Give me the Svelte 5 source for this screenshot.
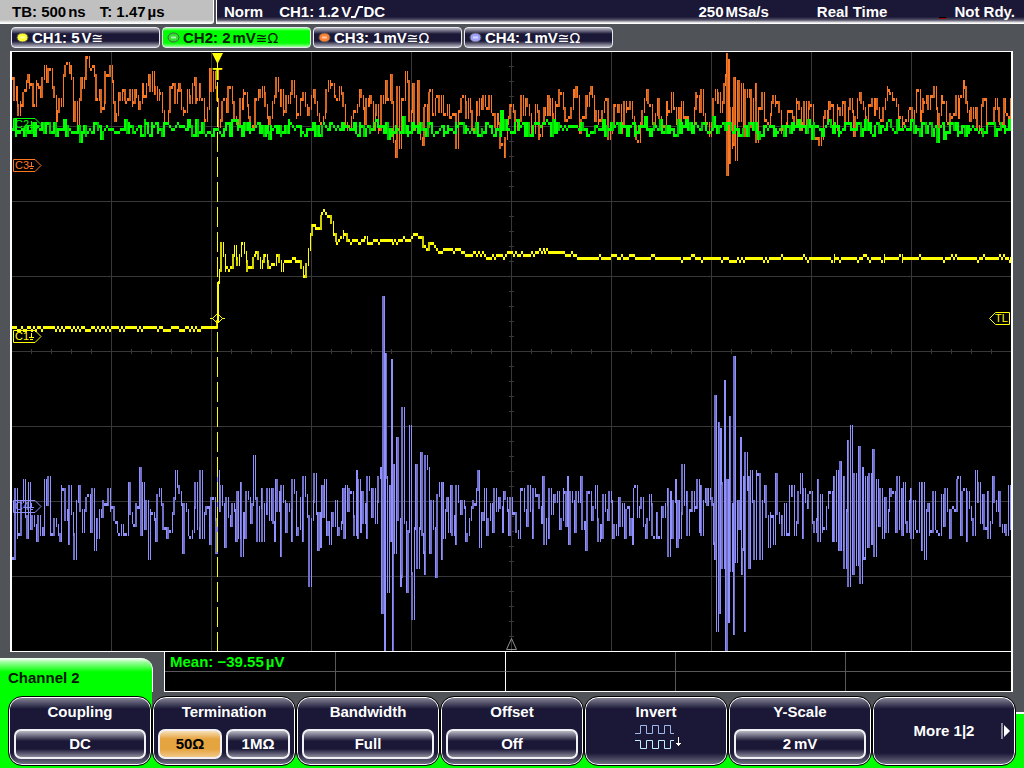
<script lang="ts">
    type Sample = [number, number];

    const channels = [
        { id: 1, scale: "5", unit: "V", symbols: "≅", color: "#ffff30" },
        { id: 2, scale: "2", unit: "mV", symbols: "≅Ω", color: "#30e030" },
        { id: 3, scale: "1", unit: "mV", symbols: "≅Ω", color: "#ff8030" },
        { id: 4, scale: "1", unit: "mV", symbols: "≅Ω", color: "#a0a0ff" },
    ];

    let selected = $state(2);
    let termination = $state("50Ω");

    // "x:y x:y ..." in screen units
    function parse(text: string): Sample[] {
        return text
            .trim()
            .split(/\s+/)
            .map((pair) => pair.split(":").map(Number) as Sample)
            .sort((a, b) => a[0] - b[0]);
    }

    function random(seed: number) {
        let s = seed;
        return () => {
            s = (s * 16807) % 2147483647;
            return s / 2147483647;
        };
    }

    // fills the space between the known points with noise, one column every 2 units
    function trace(text: string, noise: number, seed: number, base?: number) {
        const anchors = parse(text);
        const next = random(seed);
        const samples: Sample[] = [...anchors];
        for (let i = 0; i < anchors.length - 1; i++) {
            const [x0, y0] = anchors[i];
            const [x1, y1] = anchors[i + 1];
            for (let x = x0 + 2; x < x1; x += 2) {
                const mid = base ?? y0 + ((y1 - y0) * (x - x0)) / (x1 - x0);
                samples.push([x, mid + (next() * 2 - 1) * noise]);
            }
        }
        samples.sort((a, b) => a[0] - b[0]);

        let flat = "";
        let steep = "";
        let dim = "";
        let last = Math.round(samples[0][1] / 3) * 3;
        samples.forEach(([x, value], i) => {
            const y = Math.round(value / 3) * 3;
            const rise = Math.abs(y - last);
            const segment = `M${x} ${Math.min(last, y) - 1}v${rise + 3}`;
            if (rise <= 3) flat += rise ? `M${x} ${y - 1}v3` : segment;
            else if (i % 3 === 1) dim += segment;
            else steep += segment;
            last = y;
        });
        return { flat, steep, dim };
    }

    const ch1 = trace(
        `12:328 216:328 217:320 218:283 219:270 221:244 223:256 225:270 227:267 231:267 234:247 237:265
        242:242 246:262 247:270 251:266 256:251 260:266 265:254 268:267 274:264 277:254 281:270 285:261
        296:260 299:262 304:276 306:264 308:250 310:235 313:224 316:229 319:229 322:212 326:212 329:216
        331:221 334:235 337:243 339:240 343:231 347:240 360:242 365:237 368:243 375:240 390:240 393:243
        400:240 410:240 417:233 425:246 427:249 431:242 440:253 448:249 460:249 466:256 475:253 485:255
        500:256 512:253 530:254 545:251 552:252 570:254 580:257 690:258 1011:258`,
        2, 17,
    );

    const ch2 = trace(
        `12:128 36:122 80:141 101:138 146:122 192:135 269:138 320:134 388:138 392:136 403:118 408:134 430:122
        501:112 503:128 525:134 553:119 587:135 605:134 645:118 648:130 713:118 717:132 758:138 784:134
        812:138 822:136 829:121 873:135 912:121 937:141 944:138 965:135 1011:128`,
        7, 91, 128,
    );

    const ch3 = trace(
        `13:79 14:98 17:106 18:114 20:101 23:93 26:82 28:76 29:88 31:84 34:105 36:82 39:88 40:96 42:78
        44:67 46:80 48:70 50:70 52:87 54:96 57:111 59:100 61:104 63:76 65:67 67:62 70:67 71:78 73:120
        75:102 77:123 79:98 82:88 84:79 87:58 89:66 91:70 94:76 97:100 99:91 104:102 105:73 108:76
        110:67 112:82 113:103 116:115 118:93 120:100 123:90 126:103 130:91 133:102 136:96 138:109
        140:103 143:96 146:85 150:90 152:73 155:86 160:93 162:110 165:123 168:110 170:88 173:85 175:102
        178:85 181:108 183:113 187:90 190:103 192:85 194:79 197:98 200:96 205:120 209:70 211:90 215:88
        217:98 218:125 222:103 226:112 228:88 232:103 236:123 240:98 243:91 248:116 251:128 256:100
        260:97 265:105 268:123 272:103 278:91 281:91 284:112 288:103 294:95 298:114 303:94 307:115
        311:95 315:103 321:124 326:91 330:88 335:97 339:88 343:106 347:128 353:112 359:91 364:122
        369:97 373:128 376:105 379:128 381:97 385:82 388:100 390:76 393:140 395:157 397:88 399:148
        401:98 405:73 407:80 409:121 412:84 415:130 417:82 420:138 422:145 425:104 427:125 430:91
        433:115 437:97 441:95 445:115 447:105 451:118 455:115 456:148 459:110 463:97 466:118 470:112
        477:115 483:97 487:107 491:110 495:125 498:124 502:145 505:138 508:118 511:106 515:122 521:97
        527:105 531:133 535:106 540:136 545:115 550:100 553:120 561:94 565:120 569:117 574:97 577:95
        579:133 584:117 587:104 592:97 596:112 600:120 604:103 610:133 615:104 622:123 630:103 638:142
        642:110 648:103 653:122 657:100 662:125 667:115 671:94 674:108 676:122 681:103 688:122 692:122
        697:97 701:91 705:125 709:136 713:100 718:94 722:103 725:76 726:53 727:175 728:61 729:163
        730:109 733:145 734:79 735:160 737:82 739:120 741:85 743:136 745:90 747:97 749:91 751:127
        755:85 756:141 758:109 762:94 766:120 771:103 777:101 782:128 787:110 792:118 797:103 802:122
        809:103 813:139 816:139 819:145 825:112 828:103 833:124 838:108 843:103 846:124 850:100 853:136
        857:100 861:103 866:125 872:100 875:100 879:118 885:100 890:94 894:100 900:118 904:124 908:110
        914:110 918:91 921:112 924:103 928:108 934:88 937:132 942:103 948:122 954:115 959:100 964:88
        967:112 973:118 977:125 983:98 986:122 990:122 995:100 1000:122 1005:112 1010:100`,
        16, 333,
    );

    const ch4 = trace(
        `13:558 17:537 23:481 28:484 36:540 43:534 44:481 48:478 52:534 60:540 61:487 68:543 69:487
        74:558 78:487 92:490 94:549 97:537 108:490 117:531 124:534 128:484 139:469 142:484 148:558
        155:540 166:537 175:472 177:487 182:553 190:537 195:484 199:537 200:472 209:543 216:553 217:472
        220:487 224:546 235:541 238:537 240:484 241:555 244:537 253:457 257:540 262:540 267:490 274:540
        275:481 280:555 281:487 291:540 292:481 302:540 303:478 309:585 314:475 317:549 320:546 321:487
        324:481 329:543 342:490 344:538 345:487 354:535 356:472 357:538 358:481 360:532 361:493 366:538
        367:478 378:478 380:469 381:613 383:298 384:650 385:355 386:478 387:592 389:487 390:540 391:361
        392:650 393:466 394:553 396:439 400:586 401:577 402:409 406:592 409:427 411:574 412:619 415:466
        417:568 420:454 423:553 424:574 425:457 427:469 429:553 435:577 439:484 441:559 442:484 443:538
        448:532 450:487 455:544 456:487 465:541 476:490 478:472 479:547 484:490 492:532 503:493 508:535
        518:538 528:487 532:538 533:490 542:478 544:544 548:538 549:490 564:493 567:478 568:544 580:478
        585:550 589:493 595:487 598:541 601:538 603:496 612:538 616:535 624:538 629:535 632:544 633:490
        635:487 641:499 645:538 652:535 657:538 667:490 668:556 671:538 675:481 676:547 679:538 682:466
        687:535 692:493 697:481 700:487 701:535 708:490 713:544 714:559 715:397 716:631 718:424 719:613
        720:430 721:484 722:568 724:382 725:650 727:481 728:622 729:418 730:571 733:634 734:358 735:562
        740:439 741:574 742:550 743:478 744:631 745:454 748:478 749:568 750:472 754:559 756:472 758:475
        760:559 764:487 768:547 773:544 775:475 782:535 789:487 792:487 800:475 802:538 803:490 808:496
        817:481 818:541 828:493 832:541 833:478 834:541 836:472 838:550 840:463 841:550 843:478 844:568
        847:442 848:586 850:427 852:574 854:475 856:565 858:448 860:583 862:469 863:556 864:559 865:478
        867:547 869:475 871:544 872:451 874:556 876:481 882:538 889:490 897:478 902:535 903:484 910:490
        911:538 919:484 921:550 922:484 924:559 929:535 945:490 949:538 957:481 958:478 966:541 967:493
        975:472 978:484 987:493 988:538 992:478 1006:535 1008:487 1010:528`,
        24, 4242, 512,
    );

    const waves = [
        { data: ch4, color: "#9090ff", shade: "#7070c8", fine: true },
        { data: ch3, color: "#ff7820", shade: "#d06420", fine: true },
        { data: ch1, color: "#ffff00", shade: "#d0d000", fine: true },
        { data: ch2, color: "#00ff00", shade: "#00d000", fine: false },
    ];

    const gridX = [111, 211, 311, 411, 511, 611, 711, 811, 911];
    const gridY = [126, 201, 276, 351, 426, 501, 576];
    const ticksX = Array.from({ length: 49 }, (_, i) => 31 + i * 20);
    const ticksY = Array.from({ length: 39 }, (_, i) => 66 + i * 15);

    const tags = [
        { name: "C2", y: 124, color: "#00ff00" },
        { name: "C3", y: 165, color: "#ff7820" },
        { name: "C1", y: 336, color: "#ffff00" },
        { name: "C4", y: 506, color: "#9090ff" },
    ];
</script>

{#snippet key(label: string, value: string)}
    <div class="softkey" role="group" aria-label={label}>
        <span class="label">{label}</span>
        <div class="options">
            <button class="option">{value}</button>
        </div>
    </div>
{/snippet}

<div class="scope">
    <header>
        <div class="timebase">
            <span>TB: 500<i></i>ns</span>
            <span>T: 1.47<i></i>µs</span>
        </div>
        <div class="status">
            <span>Norm</span>
            <span class="trigger">
                CH1: 1.2<i></i>V
                <svg width="12" height="12" viewBox="0 0 12 12" aria-hidden="true">
                    <path d="M0 11H4L8 1H12" fill="none" stroke="#fff" stroke-width="2" />
                </svg>DC
            </span>
            <span class="rate">250<i></i>MSa/s</span>
            <span class="mode">Real Time</span>
            <span class="ready"><b></b>Not Rdy.</span>
        </div>
    </header>

    <nav>
        {#each channels as ch (ch.id)}
            <button class="channel" class:active={selected === ch.id} onclick={() => (selected = ch.id)}>
                <svg width="13" height="11" viewBox="0 0 13 11" aria-hidden="true">
                    <ellipse cx="6.5" cy="5.5" rx="5.5" ry="4.5" fill={ch.color} stroke="#555" />
                    <path d="M4 5.5h5" stroke="#fff" stroke-width="2" opacity="0.6" />
                </svg>
                <span>CH{ch.id}: {ch.scale}<i></i>{ch.unit}<em>{ch.symbols}</em></span>
            </button>
        {/each}
    </nav>

    <main>
        <svg class="screen" viewBox="12 52 999 599" preserveAspectRatio="none" role="img" aria-label="Waveforms">
            <g class="grid">
                {#each gridX as x}
                    <path d="M{x} 52h1v599h-1z" />
                {/each}
                {#each gridY as y}
                    <path d="M12 {y}h999v1h-999z" />
                {/each}
                {#each ticksX as x}
                    <path d="M{x} 349h1v5h-1z" />
                {/each}
                {#each ticksY as y}
                    <path d="M509 {y}h5v1h-5z" />
                {/each}
            </g>

            <path class="origin" d="M511.5 638.5L506.5 649.5H516.5Z" />

            {#each waves as wave}
                <g class="wave" class:fine={wave.fine} stroke={wave.color}>
                    <path d={wave.data.dim} stroke={wave.shade} />
                    <path class="slope" d={wave.data.steep} />
                    <path d={wave.data.flat} />
                </g>
            {/each}

            <g class="marker">
                <path d="M217.5 82V651" stroke-dasharray="20 5" />
                <path d="M217.5 283V328" />
                <path d="M212 53H223L218 63V68H217V63Z" fill="#ffff00" stroke="none" />
                <path d="M210 318.5H213M222 318.5H225M212.5 318.5L217.5 313.5L222.5 318.5L217.5 323.5Z" />
                <path d="M989.5 318.5L995.5 312.5H1009.5V324.5H995.5Z" />
            </g>
            <text class="t-mark" x="217.5" y="80">T</text>
            <text class="tag" x="995" y="322" fill="#ffff00">TL</text>

            {#each tags as tag}
                <g stroke={tag.color} fill="none">
                    <path d="M13.5 {tag.y - 5.5}H35L41 {tag.y + 0.5}L35 {tag.y + 6.5}H13.5Z" />
                    <path d="M31.5 {tag.y - 3}v5M29 {tag.y + 1.5}h5M30 {tag.y + 3.5}h3" />
                </g>
                <text class="tag" x="15" y={tag.y + 4} fill={tag.color}>{tag.name}</text>
            {/each}
        </svg>
    </main>

    <section class="lower">
        <h2>Channel 2</h2>
        <div class="measurements">
            <div class="cell">Mean: −39.55<i></i>µV</div>
            <div class="cell strong"></div>
            <div class="cell"></div>
            <div class="cell"></div>
            <div class="cell"></div>
            <div class="cell"></div>
            <div class="cell strong"></div>
            <div class="cell"></div>
            <div class="cell"></div>
            <div class="cell"></div>
        </div>
    </section>

    <footer>
        {@render key("Coupling", "DC")}
        <div class="softkey" role="group" aria-label="Termination">
            <span class="label">Termination</span>
            <div class="options">
                {#each ["50Ω", "1MΩ"] as value}
                    <button
                        class="option"
                        class:on={termination === value}
                        aria-pressed={termination === value}
                        onclick={() => (termination = value)}>{value}</button
                    >
                {/each}
            </div>
        </div>
        {@render key("Bandwidth", "Full")}
        {@render key("Offset", "Off")}
        <button class="softkey">
            <span class="label">Invert</span>
            <svg class="pulses" width="48" height="26" viewBox="0 0 48 26" fill="none" aria-hidden="true">
                <path
                    d="M0 9.5H5.5V1.5H11.5V9.5H17.5V1.5H23.5V9.5H29.5V1.5H35.5V9.5H39"
                    stroke="#a0b8e8"
                />
                <path
                    d="M0 16.5H5.5V24.5H11.5V16.5H17.5V24.5H23.5V16.5H29.5V24.5H35.5V16.5H39"
                    stroke="#c0f0ff"
                />
                <path d="M43.5 13V22M41 19.5H46M42 20.5H45" stroke="#fff" />
            </svg>
        </button>
        {@render key("Y-Scale", "2\u2009mV")}
        <button class="softkey more">
            <span>More 1|2</span>
            <svg width="10" height="16" viewBox="0 0 10 16" aria-hidden="true">
                <path d="M1 0v16" stroke="#fff" />
                <path d="M3 2L9 8L3 14Z" fill="#fff" />
            </svg>
        </button>
    </footer>
</div>

<style>
    :global(body) {
        margin: 0;
        background: #505458;
    }

    .scope {
        --navy: #1a1836;
        --green: #00ff00;
        display: flex;
        flex-direction: column;
        height: 100vh;
        min-height: 480px;
        background: #505458;
        color: #fff;
        font: bold 15px/20px "Liberation Sans", Arial, sans-serif;
        white-space: nowrap;
    }

    button {
        font: inherit;
        color: inherit;
        cursor: pointer;
    }

    /* thin gap between a number and its unit */
    i {
        display: inline-block;
        width: 2px;
    }

    header {
        display: flex;
        gap: 2px;
        height: 24px;
    }

    .timebase,
    .status {
        display: flex;
        box-sizing: border-box;
        border-bottom: 1px solid #fff;
        padding-top: 2px;
    }

    .timebase {
        width: 214px;
        gap: 14px;
        padding-left: 12px;
        border-right: 1px solid #fff;
        border-radius: 0 0 3px 0;
        background: linear-gradient(#c0c0c0 20px, #fff 23px);
        color: #000;
    }

    .status {
        flex: 1;
        padding-left: 7px;
        padding-right: 9px;
        border-left: 1px solid #fff;
        background: linear-gradient(var(--navy) 17px, #555368 20px, #fff 23px);
    }

    .trigger {
        margin-left: 16px;
    }

    .trigger svg {
        margin-left: -4px;
        vertical-align: -1px;
    }

    .rate {
        margin-left: auto;
    }

    .mode {
        margin-left: 48px;
    }

    .ready {
        margin-left: 52px;
    }

    .ready b {
        display: inline-block;
        width: 7px;
        height: 1px;
        margin-right: 8px;
        border-top: 1px solid #000;
        background: #a00000;
        vertical-align: -2px;
    }

    nav {
        display: flex;
        gap: 2px;
        padding: 3px 11px;
    }

    .channel {
        display: flex;
        align-items: center;
        gap: 3px;
        width: 149px;
        height: 21px;
        padding: 0 4px;
        border: 1px solid #e8e8f0;
        border-radius: 4px;
        background: linear-gradient(#b8b8c4, var(--navy) 6px, var(--navy) 13px, #b8b8c4);
        line-height: 18px;
    }

    .channel.active {
        background: linear-gradient(#a0ffa0, var(--green) 3px, var(--green) 15px, #a0ffa0);
        color: #002000;
    }

    .channel em {
        font: 14px/18px "DejaVu Sans", sans-serif;
    }

    main {
        display: flex;
        flex: 1 1 0;
        min-height: 0;
        margin: 0 11px 0 10px;
        border: solid #fff;
        border-width: 1px 2px;
        background: #000;
    }

    .screen {
        display: block;
        width: 100%;
        height: 100%;
    }

    .grid {
        fill: #383838;
        shape-rendering: crispEdges;
    }

    .origin {
        fill: none;
        stroke: #909090;
    }

    .wave {
        fill: none;
        stroke-width: 2;
        shape-rendering: crispEdges;
    }

    .wave.fine .slope {
        stroke-width: 1;
    }

    .marker {
        fill: none;
        stroke: #ffff00;
    }

    .t-mark {
        fill: #ffff00;
        font-size: 16px;
        text-anchor: middle;
    }

    .tag {
        font: 11px "Liberation Sans", Arial, sans-serif;
    }

    .lower {
        display: flex;
        align-items: flex-end;
        gap: 11px;
        height: 40px;
        padding-right: 11px;
    }

    h2 {
        box-sizing: border-box;
        width: 153px;
        height: 34px;
        margin: 0;
        padding: 10px 8px 0;
        border-right: 1px solid #fff;
        border-radius: 0 12px 0 0;
        background: linear-gradient(#fff, #a0ffa0 4px, var(--green) 14px);
        color: #001800;
        font: inherit;
    }

    .measurements {
        display: grid;
        grid-template-columns: 171fr 170fr 170fr 170fr 165fr;
        grid-template-rows: 20px 1fr;
        flex: 1;
        box-sizing: border-box;
        height: 40px;
        border: solid #fff;
        border-width: 0 2px 1px 1px;
        background: #000;
        color: var(--green);
    }

    .cell {
        min-width: 0;
        padding-left: 5px;
        border-right: 1px solid #585858;
    }

    .cell:nth-child(-n + 5) {
        border-bottom: 1px solid #585858;
    }

    .cell:nth-child(5n) {
        border-right: 0;
    }

    .cell.strong {
        border-right-color: #fff;
    }

    footer {
        display: grid;
        grid-template-columns: repeat(7, 1fr);
        box-sizing: border-box;
        height: 76px;
        padding: 4px 8px 2px;
        background:
            linear-gradient(var(--green), var(--green)) left / 152px 100% no-repeat,
            linear-gradient(#fff 2px, var(--green) 2px) right bottom / 8px 56px no-repeat,
            linear-gradient(var(--green), var(--green)) bottom / 100% 13px no-repeat;
    }

    .softkey {
        display: flex;
        flex-direction: column;
        align-items: center;
        box-sizing: border-box;
        padding: 5px 5px 0;
        border: 1px solid #000;
        border-radius: 14px;
        background: linear-gradient(#8c8b9c, var(--navy) 12px, var(--navy) 56px, #77768a);
        box-shadow: inset 0 0 0 1px #fff;
        line-height: 20px;
    }

    .options {
        display: flex;
        gap: 4px;
        align-self: stretch;
        margin-top: 7px;
    }

    .option {
        flex: 1;
        height: 30px;
        padding: 0;
        border: 2px solid #f0f0f4;
        border-radius: 7px;
        background: linear-gradient(#b8b8c4, var(--navy) 10px, var(--navy) 18px, #8c8b9c);
    }

    .option.on {
        background: linear-gradient(#f8e0b8, #e4a440 8px, #e4a440 18px, #f0c888);
        color: #000;
    }

    .pulses {
        margin: 2px 0 0 6px;
    }

    .more {
        position: relative;
        justify-content: center;
        padding-top: 0;
    }

    .more svg {
        position: absolute;
        top: 26px;
        right: 4px;
    }
</style>
